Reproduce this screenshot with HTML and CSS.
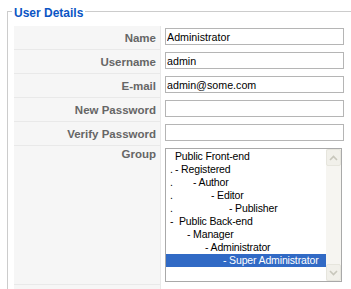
FILE: index.html
```html
<!DOCTYPE html>
<html lang="en">

<head>
    <meta charset="UTF-8">
    <title>User Details</title>
    <link rel="stylesheet" href="styles.css">
</head>

<body>
    <div class="page">
        <fieldset class="details">
            <legend>User Details</legend>
            <div class="form-grid">
                <div class="key">Name</div>
                <div class="field"><input type="text" class="inputbox" value="Administrator"></div>

                <div class="key">Username</div>
                <div class="field"><input type="text" class="inputbox" value="admin"></div>

                <div class="key">E-mail</div>
                <div class="field"><input type="text" class="inputbox" value="admin@some.com"></div>

                <div class="key">New Password</div>
                <div class="field"><input type="password" class="inputbox"></div>

                <div class="key">Verify Password</div>
                <div class="field"><input type="password" class="inputbox"></div>

                <div class="key key-top">Group</div>
                <div class="field">
                    <!-- group list box -->
                    <div class="listbox">
                        <div class="options">
                            <div class="opt"><span class="lead"></span><span class="txt lvl-0">Public Front-end</span></div>
                            <div class="opt"><span class="lead">.</span><span class="txt lvl-0">- Registered</span></div>
                            <div class="opt"><span class="lead">.</span><span class="txt lvl-1">- Author</span></div>
                            <div class="opt"><span class="lead">.</span><span class="txt lvl-2">- Editor</span></div>
                            <div class="opt"><span class="lead">.</span><span class="txt lvl-3">- Publisher</span></div>
                            <div class="opt"><span class="lead">-</span><span class="txt lvl-b0">Public Back-end</span></div>
                            <div class="opt"><span class="lead"></span><span class="txt lvl-b1">- Manager</span></div>
                            <div class="opt"><span class="lead"></span><span class="txt lvl-b2">- Administrator</span></div>
                            <div class="opt selected"><span class="lead"></span><span class="txt lvl-b3">- Super Administrator</span></div>
                        </div>
                        <div class="scrollbar">
                            <div class="sb-btn">
                                <svg width="9" height="6" viewBox="0 0 9 6"><path d="M1 5 L4.5 1.5 L8 5" fill="none" stroke="#c8c7bc" stroke-width="1.6"/></svg>
                            </div>
                            <div class="sb-btn">
                                <svg width="9" height="6" viewBox="0 0 9 6"><path d="M1 1 L4.5 4.5 L8 1" fill="none" stroke="#c8c7bc" stroke-width="1.6"/></svg>
                            </div>
                        </div>
                    </div>
                </div>

                <div class="key"></div>
                <div class="field"></div>
            </div>
        </fieldset>
    </div>
</body>

</html>
```

FILE: styles.css
```css
body {
    margin: 0;
    background-color: white;
    font-family: "Liberation Sans", Arial, sans-serif;
    overflow: hidden;
}

.page {
    padding: 2px 0 0 7px;
}

.details {
    margin: 0;
    border: 1px solid #cccccc;
    border-right: none;
    padding: 6px 0 10px 6px;
    min-width: 0;
}

.details legend {
    color: #0b55c4;
    font-weight: bold;
    font-size: 12px;
    line-height: 14px;
    padding: 4px 2px 0;
    margin-left: -2px;
}

.form-grid {
    display: grid;
    grid-template-columns: 147px 179px;
    column-gap: 4px;
}

.key {
    box-sizing: border-box;
    height: 24px;
    display: flex;
    align-items: center;
    justify-content: flex-end;
    padding-right: 4px;
    background-color: #f6f6f6;
    border-bottom: 1px solid #e9e9e9;
    border-right: 1px solid #e9e9e9;
    color: #666666;
    font-weight: bold;
    font-size: 11.5px;
}

.key-top {
    height: 139px;
    align-items: flex-start;
    padding-top: 1px;
    line-height: 14px;
}

.field {
    padding-top: 2px;
}

.inputbox {
    display: block;
    box-sizing: border-box;
    width: 179px;
    height: 17px;
    margin: 0;
    padding: 0 1px;
    border: 1px solid #b5b5b5;
    font-family: "Liberation Sans", Arial, sans-serif;
    font-size: 10.7px;
    color: black;
}

.listbox {
    box-sizing: border-box;
    width: 177px;
    height: 134px;
    display: flex;
    border: 1px solid #a9a9a9;
    font-size: 10.5px;
    letter-spacing: -0.15px;
    color: black;
}

.options {
    flex: 1;
    padding-top: 1px;
}

.opt {
    display: flex;
    height: 13px;
    line-height: 13px;
    padding-left: 4px;
    white-space: nowrap;
}

.opt.selected {
    background-color: #316ac5;
    color: white;
}

.lead {
    width: 0;
}

.lvl-0 { margin-left: 5px; }
.lvl-1 { margin-left: 23px; }
.lvl-2 { margin-left: 41px; }
.lvl-3 { margin-left: 59px; }
.lvl-b0 { margin-left: 9px; }
.lvl-b1 { margin-left: 17px; }
.lvl-b2 { margin-left: 35px; }
.lvl-b3 { margin-left: 53px; }

.scrollbar {
    width: 15px;
    display: flex;
    flex-direction: column;
    justify-content: space-between;
    background-color: #f6f5f1;
}

.sb-btn {
    box-sizing: border-box;
    height: 17px;
    display: flex;
    align-items: center;
    justify-content: center;
    border: 1px solid #e6e5dd;
    border-radius: 2px;
    background-color: #f1f0ea;
}
```
